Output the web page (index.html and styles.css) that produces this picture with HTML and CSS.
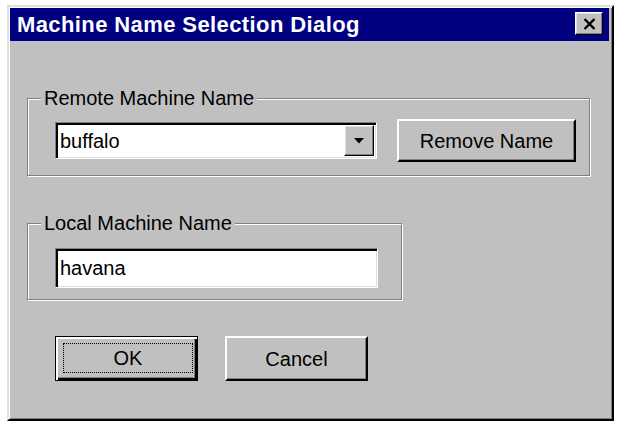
FILE: index.html
```html
<!DOCTYPE html>
<html lang="en">
<head>
<meta charset="utf-8">
<title>Machine Name Selection Dialog</title>
<link rel="stylesheet" href="styles.css">
</head>
<body>
<div class="dialog">
  <div class="titlebar">
    <span class="title">Machine Name Selection Dialog</span>
    <button class="close" type="button" aria-label="Close">
      <svg width="13" height="12" viewBox="0 0 13 12"><path d="M1.5 1 L11.5 11 M11.5 1 L1.5 11" stroke="#000" stroke-width="2.4" fill="none"/></svg>
    </button>
  </div>
  <div class="content">
    <div class="group group-remote">
      <div class="group-label">Remote Machine Name</div>
      <div class="group-body row">
        <div class="combo">
          <span class="field-text">buffalo</span>
          <span class="combo-arrow">
            <svg width="10" height="6" viewBox="0 0 10 6"><polygon points="0,0 10,0 5,5.5" fill="#000"/></svg>
          </span>
        </div>
        <button class="btn btn-remove" type="button">Remove Name</button>
      </div>
    </div>
    <div class="group group-local">
      <div class="group-label">Local Machine Name</div>
      <div class="group-body">
        <div class="textbox"><span class="field-text">havana</span></div>
      </div>
    </div>
    <div class="actions">
      <button class="btn btn-default" type="button"><span class="focus">OK</span></button>
      <button class="btn btn-action" type="button">Cancel</button>
    </div>
  </div>
</div>
</body>
</html>
```
FILE: styles.css
```css
* { box-sizing: border-box; }

body {
  margin: 0;
  background: #fff;
  font-family: "Liberation Sans", Arial, sans-serif;
  font-size: 20px;
  color: #000;
}

.dialog {
  margin: 5px 0 0 7px;
  width: 607px;
  height: 416px;
  background: #c0c0c0;
  border: 2px solid;
  border-color: #dfdfdf #000 #000 #dfdfdf;
  box-shadow: inset 1px 1px 0 #fff, inset -1px -1px 0 #808080;
  padding: 1px 3px 0 1px;
}

.titlebar {
  height: 33px;
  background: #000080;
  display: flex;
  align-items: center;
  justify-content: space-between;
  padding: 0 6px 0 7px;
}

.title {
  color: #fff;
  font-weight: bold;
  font-size: 22px;
  line-height: 22px;
  letter-spacing: 0.4px;
}

.close {
  width: 28px;
  height: 23px;
  margin-bottom: 2px;
  padding: 0;
  background: #c0c0c0;
  border: 1px solid;
  border-color: #fff #000 #000 #fff;
  box-shadow: inset -1px -1px 0 #808080, inset 1px 1px 0 #dfdfdf;
  display: flex;
  align-items: center;
  justify-content: center;
}

.content {
  padding: 57px 0 0 17px;
}

.group {
  border: 1px solid #808080;
  box-shadow: 1px 1px 0 #fff, inset 1px 1px 0 #fff;
}

.group-remote { width: 563px; }

.group-local {
  width: 375px;
  margin-top: 47px;
}

.group-label {
  width: fit-content;
  margin: -11px 0 0 13px;
  padding: 0 3px;
  background: #c0c0c0;
  line-height: 20px;
}

.group-body {
  padding: 11px 0 13px 27px;
}

.group-local .group-body {
  padding: 15px 0 11px 27px;
}

.row {
  display: flex;
  align-items: center;
  gap: 20px;
}

.combo,
.textbox {
  width: 322px;
  height: 37px;
  background: #fff;
  border: 1px solid;
  border-color: #808080 #fff #fff #808080;
  box-shadow: inset 2px 2px 0 #000, inset -1px -1px 0 #dfdfdf;
  display: flex;
  align-items: center;
  padding: 2px 2px 2px 4px;
}

.textbox {
  width: 323px;
  height: 40px;
}

.field-text {
  flex: 1;
  line-height: 20px;
}

.combo-arrow {
  width: 30px;
  align-self: stretch;
  background: #c0c0c0;
  border: 1px solid;
  border-color: #fff #000 #000 #fff;
  box-shadow: inset -1px -1px 0 #808080, inset 1px 1px 0 #dfdfdf;
  display: flex;
  align-items: center;
  justify-content: center;
}

.btn {
  font-family: inherit;
  font-size: 20px;
  color: #000;
  background: #c0c0c0;
  padding: 0;
  border: 2px solid;
  border-color: #fff #000 #000 #fff;
  box-shadow: inset -1px -1px 0 #808080;
  display: flex;
  align-items: center;
  justify-content: center;
  line-height: 20px;
}

.btn-remove {
  width: 179px;
  height: 43px;
}

.actions {
  display: flex;
  gap: 27px;
  margin: 36px 0 0 28px;
}

.btn-action,
.btn-default {
  width: 143px;
  height: 45px;
}

.btn-default {
  border: 1px solid #000;
  box-shadow: inset 2px 2px 0 #fff, inset -2px -2px 0 #000, inset -3px -3px 0 #808080;
  padding: 6px 4px 7px 7px;
  align-items: stretch;
}

.focus {
  flex: 1;
  border: 1px dotted #000;
  display: flex;
  align-items: center;
  justify-content: center;
}
```
